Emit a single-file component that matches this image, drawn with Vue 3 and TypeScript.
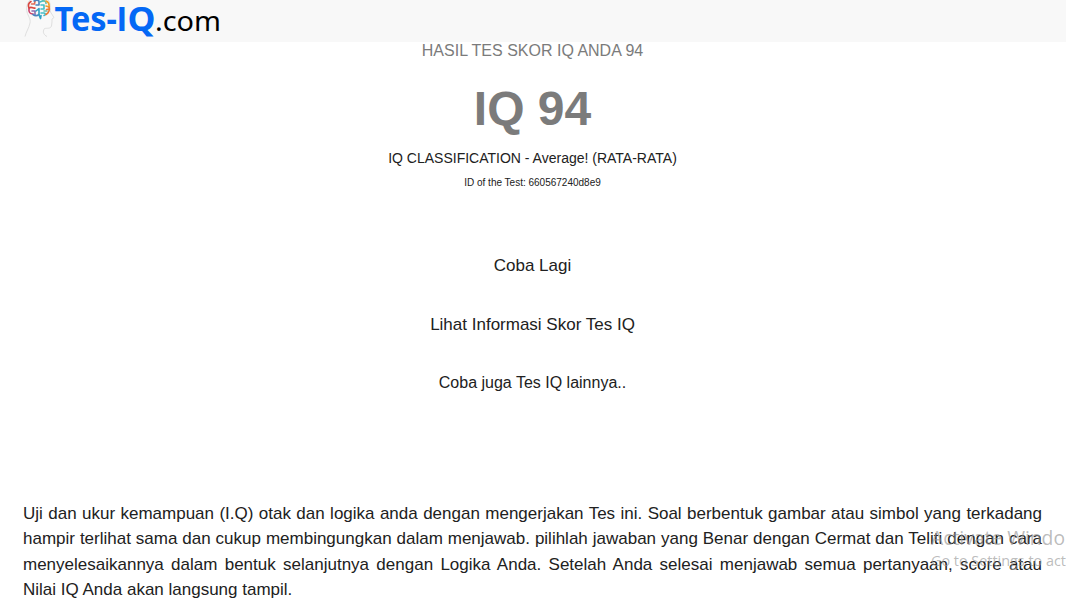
<script setup lang="ts">
interface ResultLink {
  label: string
  small?: boolean
}

const links: ResultLink[] = [
  { label: 'Coba Lagi' },
  { label: 'Lihat Informasi Skor Tes IQ' },
  { label: 'Coba juga Tes IQ lainnya..', small: true },
]
</script>

<template>
  <div class="page">
    <header class="topbar">
      <svg class="logo" width="210" height="42" viewBox="0 0 210 42">
        <g fill="none" stroke="#dfdfdf" stroke-width="1">
          <path d="M6 0C3 3 2 8 3 12C4 16 7 19 6 23C5 28 2 32 1 36.500" />
          <path d="M24 0C27 3 26 8 26.500 12L30 17.500L28 19V22L27.500 26C26.500 29 23 28 20.500 28.500C18 32 20 35 23 36.500" />
        </g>
        <g fill="none" stroke-width="1.600" stroke-linecap="round" stroke-linejoin="round">
          <path stroke="#d9453f" d="M7 1.500C4.500 3 4 6 5 8.500M5 8C8 6 9 9 11 8" />
          <path stroke="#e06a55" d="M7.500 4H10.500L11 1" />
          <path stroke="#c9426c" d="M5 9C4.500 12 6 14 9 14" />
          <path stroke="#8c6aae" d="M8 11H11V14.500" />
          <path stroke="#4b82bd" d="M10 1C12 0 14 0 15 1V5H12M9 14.500C11 16 13 16 15 14.500" />
          <path stroke="#2fa0c4" d="M12 11L15 8.500V15M15 15L16.500 18.500L17 15.500" />
          <path stroke="#42bdc8" d="M16 2L19 0.800M17 5H20V9H17M17 13H20C21.500 13 22 15 20 15.500" />
          <path stroke="#63bfac" d="M19 1C21 0.500 22 1.500 22 3.500M20 11H23" />
          <path stroke="#f0a02f" d="M22 1C24.500 2 25.500 4 25 7L22 6" />
          <path stroke="#ee7935" d="M25 7C26 10 25 12.500 22 14.500M22.500 9.500L25 9" />
        </g>
        <text class="brand" x="30.500" y="31" textLength="62.500" lengthAdjust="spacingAndGlyphs">Tes-</text>
        <text class="brand-stem" x="93" y="31">I</text>
        <text class="brand" x="103.500" y="31" textLength="28" lengthAdjust="spacingAndGlyphs">Q</text>
        <text class="domain" x="131" y="31" textLength="66" lengthAdjust="spacingAndGlyphs">.com</text>
      </svg>
    </header>
    <main class="result">
      <p class="caption">HASIL TES SKOR IQ ANDA 94</p>
      <h1 class="score">IQ 94</h1>
      <p class="classification">IQ CLASSIFICATION - Average! (RATA-RATA)</p>
      <p class="test-id">ID of the Test: 660567240d8e9</p>
      <nav class="links">
        <a v-for="link in links" :key="link.label" class="link" :class="{ small: link.small }">{{ link.label }}</a>
      </nav>
      <p class="about">Uji dan ukur kemampuan (I.Q) otak dan logika anda dengan mengerjakan Tes ini. Soal berbentuk gambar atau simbol yang terkadang hampir terlihat sama dan cukup membingungkan dalam menjawab. pilihlah jawaban yang Benar dengan Cermat dan Teliti dengan cara menyelesaikannya dalam bentuk selanjutnya dengan Logika Anda. Setelah Anda selesai menjawab semua pertanyaan, score atau Nilai IQ Anda akan langsung tampil.</p>
    </main>
    <svg class="watermark" width="136" height="50" viewBox="0 0 136 50">
      <text class="wm-title" x="1" y="20" textLength="134" lengthAdjust="spacingAndGlyphs">Activate Windo</text>
      <text class="wm-text" x="1" y="41" textLength="135" lengthAdjust="spacingAndGlyphs">Go to Settings to act</text>
    </svg>
  </div>
</template>

<style>
body {
  margin: 0;
  overflow: hidden;
}
</style>

<style scoped>
.page {
  position: relative;
  height: 604px;
  overflow: hidden;
  background: #fff;
  color: #212121;
  font-family: "Liberation Sans", Arial, sans-serif;
}
.topbar {
  display: flex;
  height: 42px;
  padding-left: 24px;
  background: #f8f8f8;
}
.logo,
.watermark {
  display: block;
  overflow: visible;
}
.brand {
  font: 700 34px "Noto Sans", sans-serif;
  fill: #0468f5;
}
.brand-stem {
  font: 700 35px "Liberation Sans", sans-serif;
  fill: #0468f5;
}
.domain {
  font: 400 28px "Noto Sans", sans-serif;
  fill: #000;
}
.result {
  display: flex;
  flex-direction: column;
  padding-right: 1px;
  text-align: center;
}
p,
h1 {
  margin: 0;
}
.caption {
  font-size: 16px;
  line-height: 18px;
  color: #7b7b7b;
}
.score {
  margin-top: 21px;
  font-size: 48px;
  line-height: 56px;
  color: #7b7b7b;
}
.classification {
  margin-top: 13px;
  font-size: 14px;
  line-height: 16px;
}
.test-id {
  margin-top: 10px;
  font-size: 10px;
  line-height: 13px;
}
.links {
  display: flex;
  flex-direction: column;
  gap: 33px;
  margin-top: 64px;
}
.link {
  font-size: 17px;
  line-height: 25.5px;
}
.link.small {
  font-size: 16px;
}
.about {
  margin-top: 105px;
  padding: 0 23px;
  font-size: 17px;
  line-height: 25.5px;
  text-align: justify;
}
.watermark {
  position: absolute;
  left: 930px;
  top: 525px;
}
.wm-title {
  font: 400 20px "Open Sans", sans-serif;
  fill: rgba(150, 150, 150, 0.65);
}
.wm-text {
  font: 400 14px "Open Sans", sans-serif;
  fill: rgba(150, 150, 150, 0.65);
}
</style>
